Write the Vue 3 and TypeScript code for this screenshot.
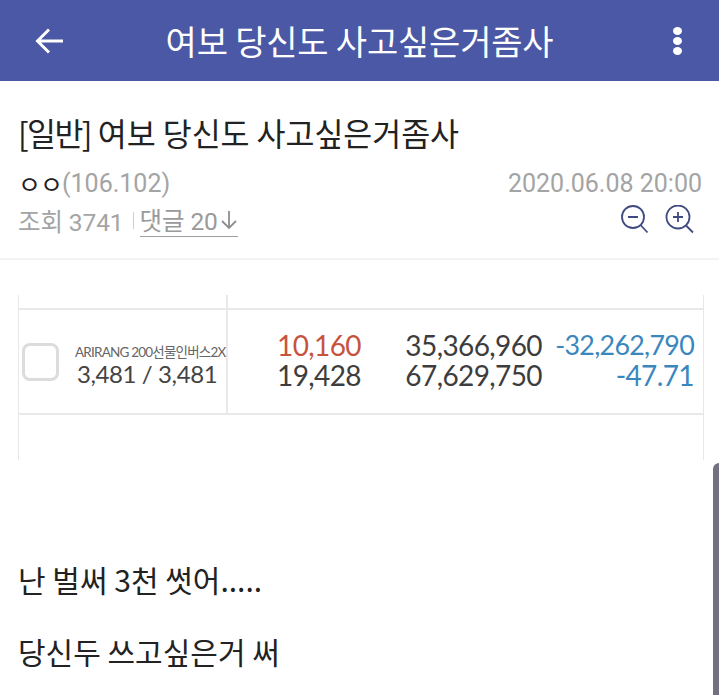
<script setup lang="ts">
const rows = [
  { price: '10,160', priceTone: 'up', amount: '35,366,960', diff: '-32,262,790', diffTone: 'long' },
  { price: '19,428', priceTone: '', amount: '67,629,750', diff: '-47.71', diffTone: '' },
]
</script>

<template>
  <div class="page">
    <header class="topbar">
      <svg class="back" width="30" height="30" viewBox="0 0 30 30" fill="none" stroke="#fff" stroke-width="3">
        <path d="M29 15H3M15 3.500 3.500 15 15 26.500" />
      </svg>
      <h1 class="topbar-title">여보 당신도 사고싶은거좀사</h1>
      <div class="dots"><i></i><i></i><i></i></div>
    </header>

    <section class="post-head">
      <h2 class="post-title"><span class="tag">[일반]</span> 여보 당신도 사고싶은거좀사</h2>
      <div class="meta-row">
        <div class="who"><span class="author">ㅇㅇ</span><span class="muted">(106.102)</span></div>
        <span class="muted date">2020.06.08 20:00</span>
      </div>
      <div class="stat-row">
        <div class="stats">
          <span class="views">조회 3741</span>
          <span class="sep"></span>
          <span class="comments">댓글 20<svg width="18" height="22" viewBox="0 0 18 22" fill="none" stroke="#8e8e8e" stroke-width="1.800"><path d="M9 2v17M2 12l7 7 7-7" /></svg></span>
        </div>
        <div class="zooms">
          <svg width="30" height="30" viewBox="0 0 30 30" fill="none" stroke="#3f4a80" stroke-width="1.800">
            <circle cx="13" cy="12" r="11" /><path d="M8 12h10M20.500 20l7 7.500" />
          </svg>
          <svg width="30" height="30" viewBox="0 0 30 30" fill="none" stroke="#3f4a80" stroke-width="1.800">
            <circle cx="13" cy="12" r="11.500" /><path d="M8 12h10M13 7v10M21 20.500l7 7" />
          </svg>
        </div>
      </div>
    </section>

    <section class="post-body">
      <div class="shot">
        <div class="shot-top"></div>
        <div class="shot-row">
          <div class="shot-name">
            <span class="check"></span>
            <div class="name-text">
              <div class="etf">ARIRANG 200선물인버스2X</div>
              <div class="qty">3,481 / 3,481</div>
            </div>
          </div>
          <div class="shot-values">
            <div v-for="row in rows" :key="row.price" class="value-line">
              <span class="price" :class="row.priceTone">{{ row.price }}</span>
              <span class="amount">{{ row.amount }}</span>
              <span class="diff" :class="row.diffTone">{{ row.diff }}</span>
            </div>
          </div>
        </div>
        <div class="shot-bottom"></div>
      </div>
      <p class="line first">난 벌써 3천 썻어.....</p>
      <p class="line">당신두 쓰고싶은거 써</p>
    </section>
    <div class="scrollbar"></div>
  </div>
</template>

<style>
html, body { margin: 0; background: #fff; overflow: hidden; }
</style>

<style scoped>
.page {
  position: relative;
  width: 719px;
  height: 695px;
  overflow: hidden;
  background: #fff;
  font-family: Roboto, "Noto Sans CJK KR", sans-serif;
}
.topbar {
  height: 81px;
  background: #4b58a5;
  display: flex;
  align-items: center;
  padding: 0 37px 0 34px;
  box-sizing: border-box;
}
.back { flex: none; }
.topbar-title {
  flex: 1;
  margin: 0 0 0 5px;
  text-align: center;
  color: #fff;
  font-size: 34px;
  font-weight: 400;
  line-height: 1;
  letter-spacing: -0.2px;
  font-family: "Noto Sans CJK KR", sans-serif;
}
.dots { width: 32px; display: flex; flex-direction: column; align-items: flex-end; gap: 2px; }
.dots i { display: block; width: 9px; height: 8px; border-radius: 50%; background: #fff; }
.post-head {
  height: 179px;
  box-sizing: border-box;
  padding: 29px 17px 0 18px;
  border-bottom: 2px solid #f3f3f3;
}
.post-title {
  margin: 0;
  color: #222;
  font-size: 31.500px;
  line-height: 44px;
  font-weight: 400;
  letter-spacing: -0.05px;
  font-family: "Noto Sans CJK KR", sans-serif;
}
.tag { letter-spacing: -1.6px; }
.meta-row {
  margin-top: 13px;
  display: flex;
  justify-content: space-between;
  align-items: center;
  height: 32px;
}
.who { display: flex; align-items: center; }
.author { color: #222; font-size: 25px; font-family: "Noto Sans CJK KR", sans-serif; letter-spacing: -1px; }
.muted { color: #a4a4a4; font-size: 25px; letter-spacing: 0; }
.date { letter-spacing: 0; }
.stat-row {
  display: flex;
  justify-content: space-between;
  align-items: center;
  margin-top: 3px;
  height: 36px;
}
.stats { display: flex; align-items: center; color: #a4a4a4; font-size: 24.500px; letter-spacing: -0.1px; }
.sep { width: 1px; height: 17px; background: #cfcfcf; margin: 0 6px 0 9px; }
.comments {
  color: #9a9a9a;
  display: flex;
  align-items: center;
  gap: 2px;
  height: 32px;
  border-bottom: 1px solid #9f9f9f;
}
.zooms { display: flex; gap: 15px; margin-right: 7px; }
.post-body { padding: 35px 0 0 18px; }
.shot {
  width: 686px;
  height: 165px;
  box-sizing: border-box;
  border-left: 1px solid #e8e8e8;
  border-right: 1px solid #e8e8e8;
}
.shot-top { height: 13px; width: 209px; box-sizing: border-box; border-right: 2px solid #e9e9e9; }
.shot-row {
  height: 107px;
  box-sizing: border-box;
  border-top: 2px solid #e9e9e9;
  border-bottom: 2px solid #e9e9e9;
  display: flex;
}
.shot-name {
  width: 209px;
  box-sizing: border-box;
  border-right: 2px solid #e9e9e9;
  display: flex;
  align-items: center;
  padding-left: 3px;
  flex: none;
}
.check {
  width: 37px;
  height: 38px;
  border: 3px solid #dcdcdc;
  border-radius: 8px;
  box-sizing: border-box;
  margin-right: 16px;
  flex: none;
}
.name-text { margin-top: 9px; white-space: nowrap; }
.etf { font-size: 13.500px; color: #666; letter-spacing: -0.8px; line-height: 15px; font-family: Lato, "Noto Sans CJK KR", sans-serif; }
.qty { font-size: 24px; color: #444; line-height: 28px; margin-left: 2px; letter-spacing: -0.4px; font-family: Lato, sans-serif; }
.shot-values {
  flex: 1;
  padding-top: 20px;
  font-family: Lato, sans-serif;
  font-size: 28px;
  color: #3d3d3d;
}
.value-line { display: flex; height: 30px; line-height: 30px; letter-spacing: -0.6px; }
.price { width: 133px; text-align: right; }
.price.up { color: #c7533f; }
.amount { width: 181px; text-align: right; }
.diff { width: 152px; text-align: right; color: #3a87bd; }
.diff.long { font-size: 26.800px; letter-spacing: -0.7px; }
.line {
  margin: 0;
  color: #222;
  font-size: 30px;
  line-height: 40px;
  height: 72px;
  font-family: "Noto Sans CJK KR", sans-serif;
}
.line.first { margin-top: 99px; }
.scrollbar {
  position: absolute;
  right: 0;
  top: 463px;
  bottom: 0;
  width: 6px;
  background: #73717f;
  border-top-left-radius: 6px;
}
</style>
